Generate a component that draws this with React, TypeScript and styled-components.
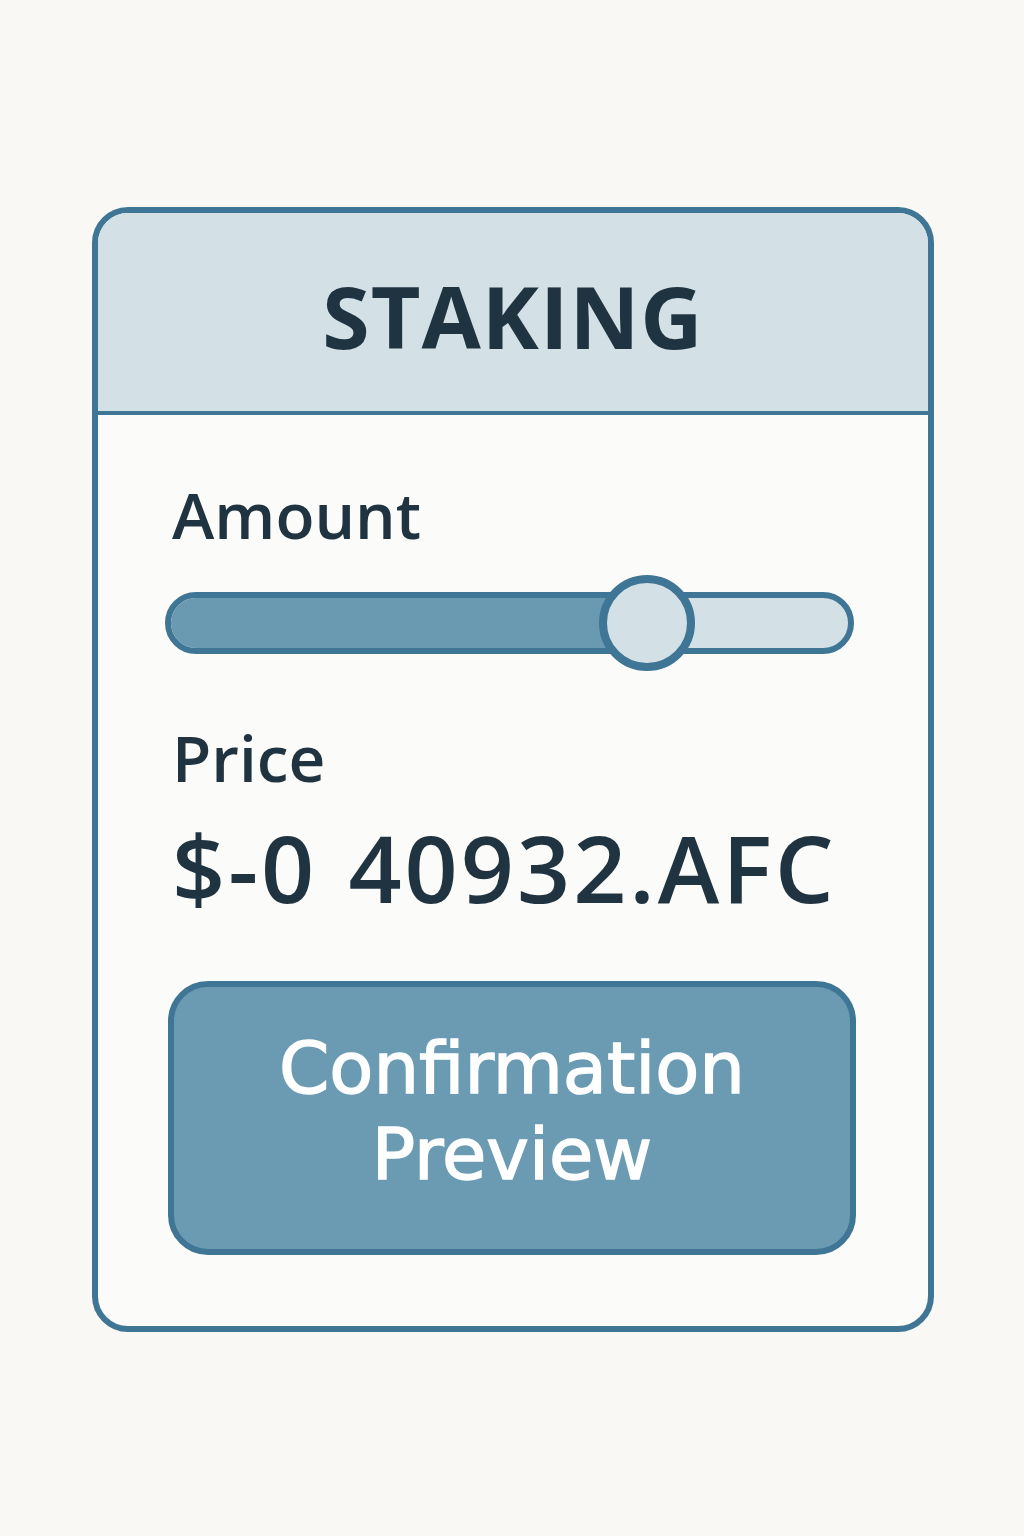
import React from "react";
import styled, {createGlobalStyle} from "styled-components";

const Global = createGlobalStyle`
  html, body {
    margin: 0;
    padding: 0;
    background: #f9f8f4;
  }
  body {
    font-family: "Open Sans", "DejaVu Sans", sans-serif;
    color: #1f3340;
  }
`

const Page = styled.div`
  width: 1024px;
  height: 1536px;
  padding: 207px 0 0 92px;
  box-sizing: border-box;
`

const Card = styled.div`
  width: 842px;
  height: 1125px;
  box-sizing: border-box;
  border: 6px solid #3f7595;
  border-radius: 36px;
  background: #fbfbf9;
  overflow: hidden;
  display: flex;
  flex-direction: column;
`

const Header = styled.div`
  height: 202px;
  box-sizing: border-box;
  background: #d3e0e6;
  border-bottom: 4px solid #3f7595;
  display: flex;
  align-items: center;
  justify-content: center;
`

const Title = styled.h1`
  margin: 0;
  font-size: 86px;
  font-weight: 700;
  letter-spacing: 1px;
  color: #1f3340;
  padding-top: 6px;
`

const Body = styled.div`
  padding: 62px 74px 0 74px;
  display: flex;
  flex-direction: column;
`

const Label = styled.div`
  font-size: 64px;
  font-weight: 600;
  line-height: 76px;
`

const SliderWrap = styled.div`
  position: relative;
  height: 100px;
  margin: 20px 0 0 -7px;
  display: flex;
  align-items: center;
`

const Track = styled.div`
  width: 100%;
  height: 62px;
  box-sizing: border-box;
  border: 6px solid #3f7595;
  border-radius: 31px;
  background: #d3e0e6;
  overflow: hidden;
`

const Fill = styled.div`
  height: 100%;
  background: #6a9ab2;
`

const Thumb = styled.div`
  position: absolute;
  top: 2px;
  width: 96px;
  height: 96px;
  box-sizing: border-box;
  border: 8px solid #3f7595;
  border-radius: 50%;
  background: #d3e0e6;
  transform: translateX(-50%);
`

const PriceLabel = styled(Label)`
  margin-top: 47px;
`

const PriceValue = styled.div`
  margin-top: 16px;
  font-size: 93px;
  font-weight: 600;
  line-height: 110px;
  letter-spacing: 3px;
  word-spacing: 4px;
`

const Button = styled.button`
  margin: 59px 0 0 -4px;
  width: 688px;
  height: 274px;
  box-sizing: border-box;
  border: 6px solid #3f7595;
  border-radius: 40px;
  background: #6b9bb3;
  color: #ffffff;
  font-family: "DejaVu Sans", "Open Sans", sans-serif;
  font-size: 72px;
  font-weight: 400;
  -webkit-text-stroke: 1.5px #ffffff;
  line-height: 86px;
  padding: 0 0 14px;
`

const value = 0.7

export default function App() {
  return <>
    <Global/>
    <Page>
      <Card>
        <Header>
          <Title>STAKING</Title>
        </Header>
        <Body>
          <Label>Amount</Label>
          <SliderWrap>
            <Track>
              <Fill style={{width: `${value * 100}%`}}/>
            </Track>
            <Thumb style={{left: `${value * 100}%`}}/>
          </SliderWrap>
          <PriceLabel>Price</PriceLabel>
          <PriceValue>$-0 40932.AFC</PriceValue>
          <Button>Confirmation<br/>Preview</Button>
        </Body>
      </Card>
    </Page>
  </>
}
